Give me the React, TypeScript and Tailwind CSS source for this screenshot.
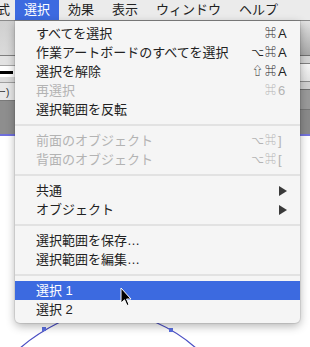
const FONT = "[font-family:'Liberation_Sans','Noto_Sans_CJK_JP','DejaVu_Sans',sans-serif]";

type Item =
  | { sep: true }
  | { sep?: false; label: string; mods?: string[]; keyChar?: string; disabled?: boolean; sub?: boolean; active?: boolean };

const items: Item[] = [
  { label: "すべてを選択", mods: ["⌘"], keyChar: "A" },
  { label: "作業アートボードのすべてを選択", mods: ["⌥", "⌘"], keyChar: "A" },
  { label: "選択を解除", mods: ["⇧", "⌘"], keyChar: "A" },
  { label: "再選択", mods: ["⌘"], keyChar: "6", disabled: true },
  { label: "選択範囲を反転" },
  { sep: true },
  { label: "前面のオブジェクト", mods: ["⌥", "⌘"], keyChar: "]", disabled: true },
  { label: "背面のオブジェクト", mods: ["⌥", "⌘"], keyChar: "[", disabled: true },
  { sep: true },
  { label: "共通", sub: true },
  { label: "オブジェクト", sub: true },
  { sep: true },
  { label: "選択範囲を保存…" },
  { label: "選択範囲を編集…" },
  { sep: true },
  { label: "選択 1", active: true },
  { label: "選択 2" },
];

const topMenus = ["選択", "効果", "表示", "ウィンドウ", "ヘルプ"];

function MenuBar() {
  return (
    <div className="flex h-[21px] items-center border-b border-[#8a8a8a] bg-[#ebebeb] text-[13px] text-[#222]">
      <span className="ml-[-3px] mr-[5px]">式</span>
      {topMenus.map((m) => (
        <span
          key={m}
          className={
            m === "選択"
              ? "flex h-full items-center bg-[#3c6ae0] px-[9px] text-white"
              : "flex h-full items-center px-[9px]"
          }
        >
          {m}
        </span>
      ))}
    </div>
  );
}

function LeftEdge() {
  return (
    <div className="flex w-[15px] flex-col">
      <div className="h-[34px] bg-gradient-to-b from-[#d0d0d0] to-[#dadada]" />
      <div className="h-[1px] bg-[#7f7f7f]" />
      <div className="h-[9px] bg-[#e3e3e3]" />
      <div className="h-[1px] bg-[#a5a5a5]" />
      <div className="h-[11px] bg-white pt-[5px]">
        <div className="h-[3px] w-[13px] bg-black" />
      </div>
      <div className="h-[6px] border-b border-[#a0a0a0] bg-[#dcdcdc]" />
      <div className="flex h-[17px] items-end overflow-hidden bg-[#e8e8e8] text-[10px] leading-[14px] text-[#333]">
        <span className="ml-[-4px] whitespace-nowrap">ー)</span>
      </div>
      <div className="h-[34px] border-t border-[#7a7a7a] bg-[#8e8e8e]" />
      <div className="h-[2px] bg-[#6f6fdc]" />
      <div className="flex-1 bg-white" />
    </div>
  );
}

function RightEdge() {
  return (
    <div className="flex w-[10px] flex-col">
      <div className="h-[34px] bg-gradient-to-b from-[#e2e2e2] to-[#a8a8a8]" />
      <div className="h-[1px] bg-[#707070]" />
      <div className="h-[7px] bg-[#d4d4d4]" />
      <div className="h-[1px] bg-[#808080]" />
      <div className="h-[17px] bg-gradient-to-b from-[#f6f6f6] to-[#e2e2e2]" />
      <div className="h-[1px] bg-[#8a8a8a]" />
      <div className="h-[7px] bg-[#d0d0d0]" />
      <div className="h-[1px] bg-[#6e6e6e]" />
      <div className="h-[19px] bg-[#9a9a9a]" />
      <div className="h-[1px] bg-[#777]" />
      <div className="h-[24px] bg-[#8a8a8a]" />
      <div className="h-[2px] bg-[#7474dc]" />
      <div className="flex-1 bg-white" />
    </div>
  );
}

function SubArrow() {
  return (
    <svg width="9" height="10" viewBox="0 0 9 10" className="mr-[-1px]">
      <polygon points="0,0 8,5 0,10" fill="#3a3a3a" />
    </svg>
  );
}

function Row({ item }: { item: Exclude<Item, { sep: true }> }) {
  const color = item.active ? "text-white" : item.disabled ? "text-[#b3b3b3]" : "text-[#222]";
  return (
    <div
      className={`flex h-[19px] items-center justify-between pl-[21px] pr-[13px] ${color} ${
        item.active ? "bg-[#3c6ae0]" : ""
      }`}
    >
      <span className="whitespace-nowrap">{item.label}</span>
      {item.keyChar && (
        <span className="flex items-center">
          {item.mods?.map((m) => (
            <span key={m} className="w-[13px] text-center text-[11px]">
              {m}
            </span>
          ))}
          <span className="w-[10px] pl-[1px] text-left">{item.keyChar}</span>
        </span>
      )}
      {item.sub && <SubArrow />}
    </div>
  );
}

function SelectMenu() {
  return (
    <div className="absolute left-[15px] top-[21px] w-[285px] rounded-b-[5px] bg-[#f5f5f5] pb-[4px] pt-[3px] text-[13px] leading-none shadow-[0_3px_10px_rgba(0,0,0,0.3),0_0_0_1px_rgba(0,0,0,0.08)]">
      {items.map((item, i) =>
        item.sep ? (
          <div key={i} className="h-[12px] pt-[5px]">
            <div className="h-[2px] bg-[#e2e2e2]" />
          </div>
        ) : (
          <Row key={i} item={item} />
        )
      )}
    </div>
  );
}

function Cursor() {
  return (
    <svg width="14" height="22" viewBox="0 0 14 22" className="absolute left-[119px] top-[287px]">
      <path d="M2 1 L2 16 L5.5 12.8 L8 18.5 L10 17.6 L7.6 12 L12 12 Z" fill="#000" stroke="#fff" strokeWidth="1" strokeLinejoin="round" />
    </svg>
  );
}

function ArtPath() {
  return (
    <svg width="310" height="347" className="pointer-events-none absolute left-0 top-0">
      <path d="M18 350 Q 34 335 60 322" fill="none" stroke="#4b4fc4" strokeWidth="1.3" />
      <path d="M155 322 Q 180 333 198 350" fill="none" stroke="#4b4fc4" strokeWidth="1.3" />
      <rect x="42" y="327" width="4" height="4" fill="#5b6fe0" />
      <rect x="169" y="328" width="4" height="4" fill="#5b6fe0" />
    </svg>
  );
}

export default function App() {
  return (
    <div className={`relative h-[347px] w-[310px] overflow-hidden bg-white ${FONT}`}>
      <MenuBar />
      <div className="flex h-[325px]">
        <LeftEdge />
        <div className="flex-1 bg-white" />
        <RightEdge />
      </div>
      <ArtPath />
      <SelectMenu />
      <Cursor />
    </div>
  );
}
